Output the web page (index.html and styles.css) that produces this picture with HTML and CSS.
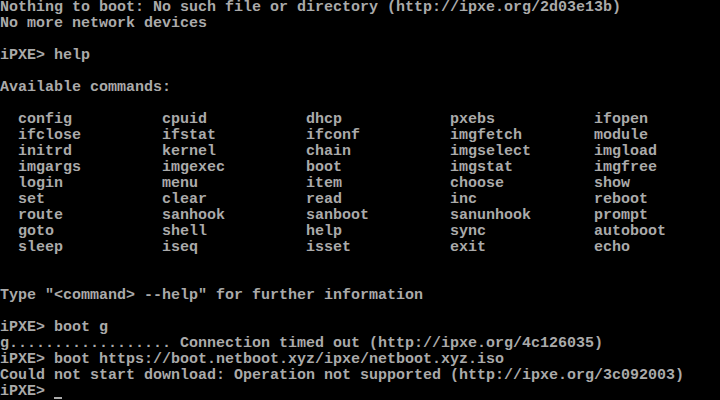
FILE: index.html
```html
<!DOCTYPE html>
<html>
<head>
<meta charset="utf-8">
<link rel="stylesheet" href="styles.css">
</head>
<body>
<div class="screen">
<pre class="out">Nothing to boot: No such file or directory (http://ipxe.org/2d03e13b)
No more network devices

iPXE&gt; help

Available commands:</pre>
<div class="cmds">
<span>config</span><span>cpuid</span><span>dhcp</span><span>pxebs</span><span>ifopen</span>
<span>ifclose</span><span>ifstat</span><span>ifconf</span><span>imgfetch</span><span>module</span>
<span>initrd</span><span>kernel</span><span>chain</span><span>imgselect</span><span>imgload</span>
<span>imgargs</span><span>imgexec</span><span>boot</span><span>imgstat</span><span>imgfree</span>
<span>login</span><span>menu</span><span>item</span><span>choose</span><span>show</span>
<span>set</span><span>clear</span><span>read</span><span>inc</span><span>reboot</span>
<span>route</span><span>sanhook</span><span>sanboot</span><span>sanunhook</span><span>prompt</span>
<span>goto</span><span>shell</span><span>help</span><span>sync</span><span>autoboot</span>
<span>sleep</span><span>iseq</span><span>isset</span><span>exit</span><span>echo</span>
</div>
<pre class="out">


Type "&lt;command&gt; --help" for further information

iPXE&gt; boot g
g.................. Connection timed out (http://ipxe.org/4c126035)
iPXE&gt; boot https://boot.netboot.xyz/ipxe/netboot.xyz.iso
Could not start download: Operation not supported (http://ipxe.org/3c092003)
iPXE&gt; <span class="cursor"></span></pre>
</div>
</body>
</html>
```
FILE: styles.css
```css
html, body {
  margin: 0;
  padding: 0;
  background: #000;
  width: 720px;
  height: 400px;
  overflow: hidden;
}
.screen {
  font-family: "Liberation Mono", monospace;
  font-size: 15px;
  font-weight: bold;
  line-height: 16px;
  color: #aaaaaa;
  display: flex;
  flex-direction: column;
}
.out {
  margin: 0;
  font: inherit;
  white-space: pre;
}
.cmds {
  display: grid;
  grid-template-columns: repeat(5, 144px);
  padding: 16px 0 0 18px;
}
.cmds span {
  height: 16px;
  white-space: pre;
}
.cursor {
  display: inline-block;
  width: 8px;
  height: 2px;
  background: #aaaaaa;
  vertical-align: -4px;
}
```
